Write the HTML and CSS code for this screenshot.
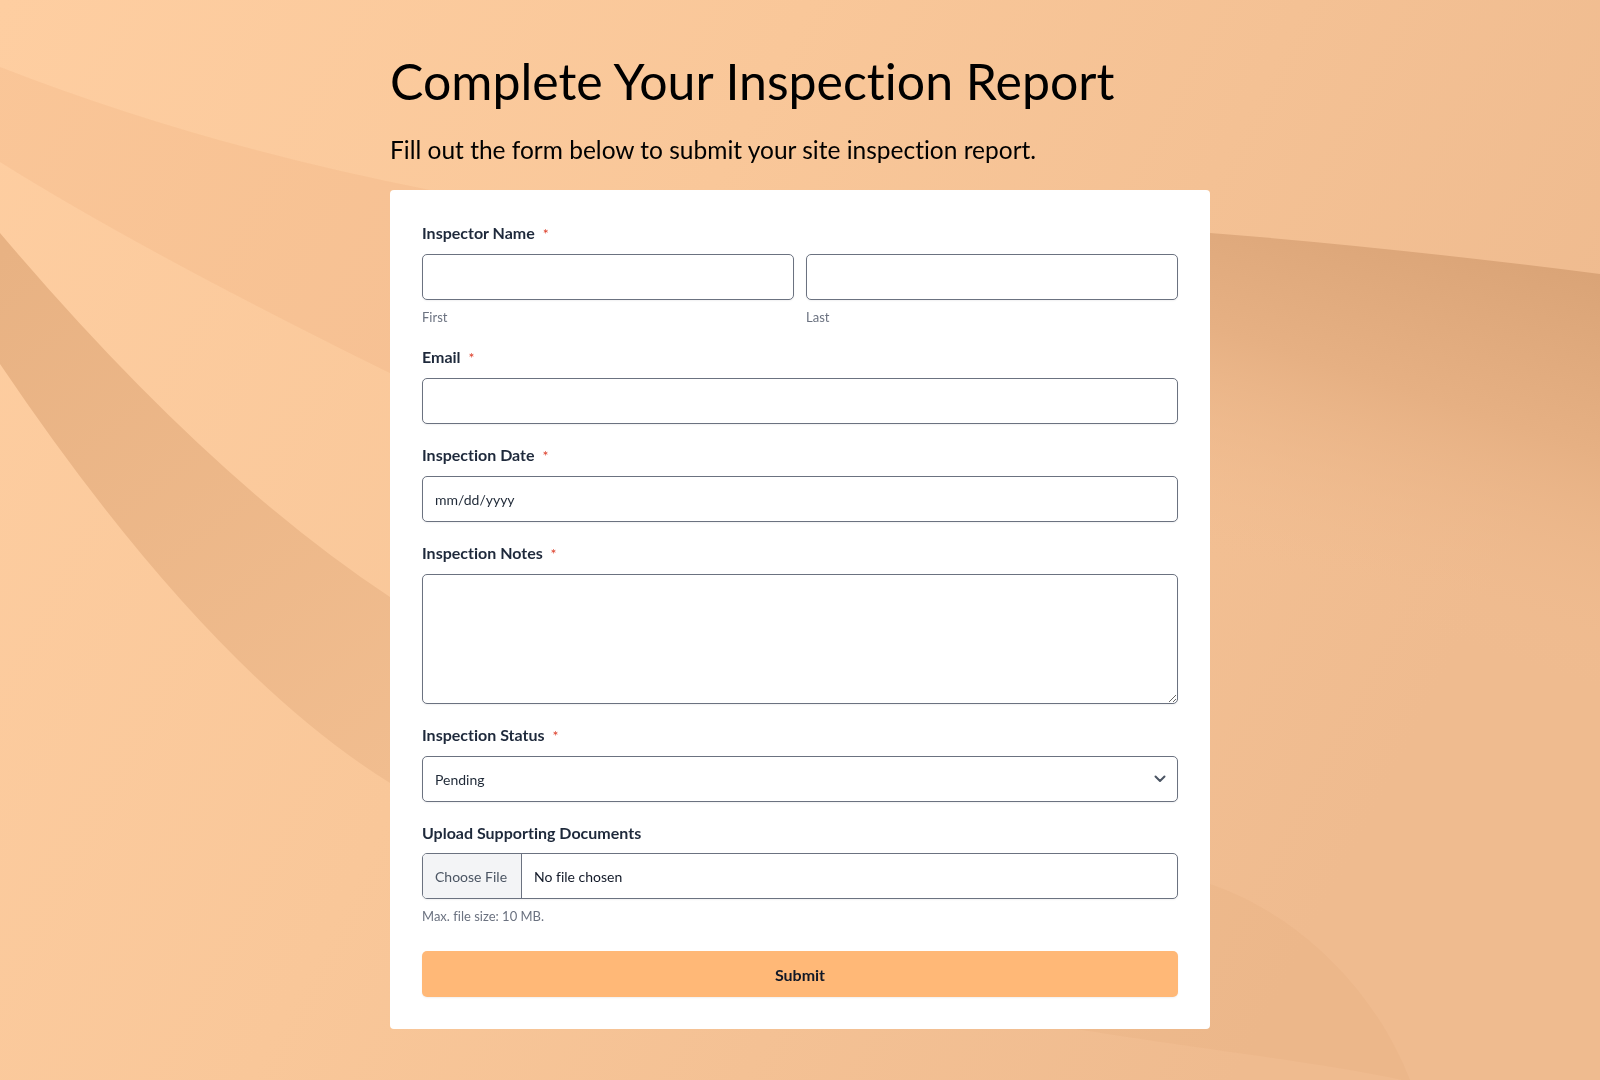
FILE: index.html
```html
<!DOCTYPE html>
<html lang="en">
<head>
<meta charset="utf-8">
<title>Complete Your Inspection Report</title>
<link rel="stylesheet" href="styles.css">
</head>
<body>
<svg class="bg" viewBox="0 0 1600 1080" preserveAspectRatio="none" aria-hidden="true">
  <defs>
    <linearGradient id="base" x1="0" y1="0" x2="1" y2="0.35">
      <stop offset="0" stop-color="#fecea1"/>
      <stop offset="0.45" stop-color="#f9c799"/>
      <stop offset="1" stop-color="#efbb8f"/>
    </linearGradient>
    <linearGradient id="band2" gradientUnits="userSpaceOnUse" x1="0" y1="250" x2="400" y2="780">
      <stop offset="0" stop-color="#e8b283"/>
      <stop offset="1" stop-color="#f1bd8f"/>
    </linearGradient>
    <linearGradient id="rightDark" gradientUnits="userSpaceOnUse" x1="1560" y1="250" x2="1420" y2="680">
      <stop offset="0" stop-color="#d9a376"/>
      <stop offset="0.4" stop-color="#e6b083"/>
      <stop offset="0.9" stop-color="#f2be92" stop-opacity="0"/>
    </linearGradient>
  </defs>
  <rect width="1600" height="1080" fill="url(#base)"/>
  <path d="M0,67 Q200,145 430,190 L700,300 L700,520 Q220,300 0,162 Z" fill="#c06a2a" fill-opacity="0.07"/>
  <path d="M0,233 Q205,475 390,597 L600,700 L600,900 Q390,800 390,783 Q205,668 0,364 Z" fill="url(#band2)"/>
  <path d="M1000,225 L1210,233 Q1380,246 1600,274 L1600,760 L1000,760 Z" fill="url(#rightDark)"/>
  <path d="M1210,884 C1300,915 1375,990 1410,1080 L1402,1080 C1300,1058 1120,1040 1000,1015 L1000,884 Z" fill="#c77a3a" fill-opacity="0.05"/>
</svg>

<main class="page">
  <h1 class="title">Complete Your Inspection Report</h1>
  <p class="subtitle">Fill out the form below to submit your site inspection report.</p>

  <form class="card" onsubmit="return false;">
    <div class="field">
      <label class="label">Inspector Name <span class="req">*</span></label>
      <div class="name-row">
        <div class="name-col">
          <input class="input" type="text" aria-label="First">
          <span class="hint">First</span>
        </div>
        <div class="name-col">
          <input class="input" type="text" aria-label="Last">
          <span class="hint">Last</span>
        </div>
      </div>
    </div>

    <div class="field">
      <label class="label" for="email">Email <span class="req">*</span></label>
      <input class="input" id="email" type="email">
    </div>

    <div class="field">
      <label class="label" for="date">Inspection Date <span class="req">*</span></label>
      <input class="input" id="date" type="text" placeholder="mm/dd/yyyy">
    </div>

    <div class="field">
      <label class="label" for="notes">Inspection Notes <span class="req">*</span></label>
      <textarea class="input textarea" id="notes"></textarea>
    </div>

    <div class="field">
      <label class="label" for="status">Inspection Status <span class="req">*</span></label>
      <div class="select-wrap">
        <select class="input select" id="status">
          <option>Pending</option>
          <option>Completed</option>
          <option>Failed</option>
        </select>
        <svg class="chevron" width="12" height="8" viewBox="0 0 12 8" aria-hidden="true">
          <path d="M1.5 1.5 L6 6 L10.5 1.5" fill="none" stroke="#4b5563" stroke-width="2" stroke-linecap="round" stroke-linejoin="round"/>
        </svg>
      </div>
    </div>

    <div class="field field-last">
      <span class="label">Upload Supporting Documents</span>
      <label class="file">
        <input class="file-native" type="file">
        <span class="file-btn">Choose File</span>
        <span class="file-name">No file chosen</span>
      </label>
      <span class="hint">Max. file size: 10 MB.</span>
    </div>

    <button class="submit" type="submit">Submit</button>
  </form>
</main>
</body>
</html>
```

FILE: styles.css
```css
* {
  box-sizing: border-box;
}

html,
body {
  margin: 0;
  min-height: 100%;
}

body {
  font-family: Lato, "Noto Sans", sans-serif;
  font-variant-ligatures: none;
  color: #1e293b;
  background: #fbc99c;
  overflow: hidden;
}

.bg {
  position: fixed;
  top: 0;
  left: 0;
  width: 100vw;
  height: 100vh;
  z-index: 0;
}

.page {
  position: relative;
  z-index: 1;
  width: 820px;
  margin: 0 auto;
  padding-top: 51px;
}

.title {
  margin: 0;
  font-size: 50px;
  line-height: 60px;
  font-weight: 400;
  color: #000;
}

.subtitle {
  margin: 24px 0 0;
  font-size: 24.5px;
  line-height: 29px;
  font-weight: 400;
  color: #000;
}

.card {
  margin-top: 26px;
  background: #fff;
  border-radius: 4px;
  padding: 32px;
}

.field {
  margin-bottom: 20px;
}

.field-last {
  margin-bottom: 0;
}

.label {
  display: block;
  margin-bottom: 10px;
  font-size: 16px;
  line-height: 21px;
  font-weight: 700;
  color: #1e293b;
}

.req {
  margin-left: 4px;
  font-size: 14px;
  font-weight: 400;
  color: #dc3b26;
}

.input {
  display: block;
  width: 100%;
  height: 46px;
  margin: 0;
  padding: 0 12px;
  border: 1px solid #6b7280;
  border-radius: 5px;
  background: #fff;
  font-family: Lato, "Noto Sans", sans-serif;
  font-size: 14px;
  color: #1f2937;
  box-shadow: 0 1px 2px rgba(15, 23, 42, 0.06);
  outline: none;
}

.input::placeholder {
  color: #1f2937;
  opacity: 1;
}

.textarea {
  height: 130px;
  padding: 10px 12px;
  resize: vertical;
}

.name-row {
  display: grid;
  grid-template-columns: 1fr 1fr;
  column-gap: 12px;
}

.hint {
  display: block;
  margin-top: 8px;
  font-size: 13px;
  line-height: 18px;
  color: #6b7280;
}

.select-wrap {
  position: relative;
}

.select {
  appearance: none;
  -webkit-appearance: none;
  padding-right: 36px;
}

.chevron {
  position: absolute;
  right: 12px;
  top: 19px;
  pointer-events: none;
}

.file {
  display: flex;
  height: 46px;
  border: 1px solid #6b7280;
  border-radius: 5px;
  overflow: hidden;
  background: #fff;
  box-shadow: 0 1px 2px rgba(15, 23, 42, 0.06);
  cursor: pointer;
}

.file-native {
  display: none;
}

.file-btn {
  display: flex;
  align-items: center;
  width: 99px;
  padding-left: 12px;
  background: #f3f4f6;
  border-right: 1px solid #6b7280;
  font-size: 14px;
  color: #4b5563;
}

.file-name {
  display: flex;
  align-items: center;
  padding-left: 12px;
  font-size: 14px;
  color: #111827;
}

.submit {
  display: block;
  width: 100%;
  height: 46px;
  margin-top: 26px;
  border: 0;
  border-radius: 5px;
  background: #ffb877;
  box-shadow: 0 1px 2px rgba(15, 23, 42, 0.06);
  font-family: Lato, "Noto Sans", sans-serif;
  font-size: 16px;
  font-weight: 700;
  color: #111827;
  cursor: pointer;
}
```
